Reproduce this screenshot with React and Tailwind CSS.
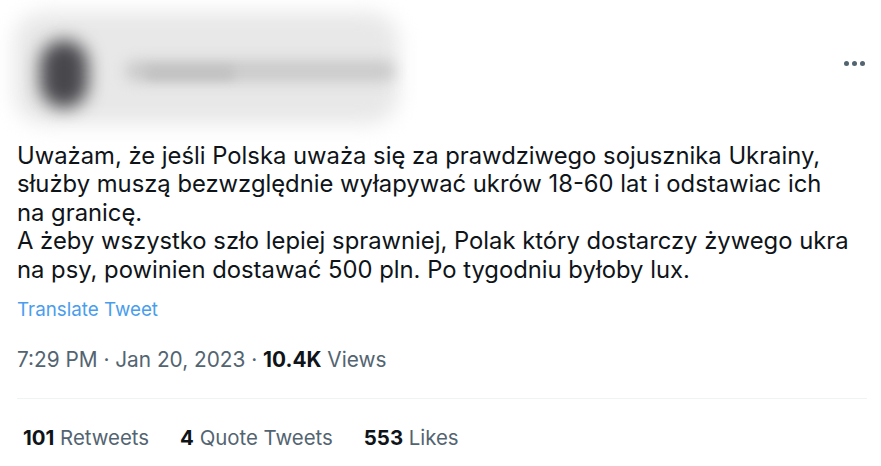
const lines = [
  "Uważam, że jeśli Polska uważa się za prawdziwego sojusznika Ukrainy,",
  "służby muszą bezwzględnie wyłapywać ukrów 18-60 lat i odstawiac ich",
  "na granicę.",
  "A żeby wszystko szło lepiej sprawniej, Polak który dostarczy żywego ukra",
  "na psy, powinien dostawać 500 pln. Po tygodniu byłoby lux.",
];

export default function App() {
  return (
    <div className="w-[881px] h-[466px] bg-white overflow-hidden" style={{ fontFamily: '"Inter", "Liberation Sans", sans-serif' }}>
      <div className="flex items-start justify-between pl-[10px] pr-[16px] pt-[8px] h-[125px]">
        <div className="relative w-[400px] h-[117px]">
          <div className="absolute left-[4px] top-[4px] w-[385px] h-[112px] bg-[#e8e8e8] blur-[10px] rounded-[30px]" />
          <div className="absolute left-[30px] top-[32px] w-[48px] h-[68px] bg-[#47474c] blur-[9px] rounded-full" />
          <div className="absolute left-[115px] top-[52px] w-[270px] h-[22px] bg-[#cbcbcb] blur-[7px] rounded-full" />
          <div className="absolute left-[135px] top-[58px] w-[90px] h-[14px] bg-[#c2c2c2] blur-[5px] rounded-full" />
        </div>
        <div className="flex gap-[3px] mt-[53px]">
          <span className="w-[5px] h-[5px] rounded-full bg-[#536471]" />
          <span className="w-[5px] h-[5px] rounded-full bg-[#536471]" />
          <span className="w-[5px] h-[5px] rounded-full bg-[#536471]" />
        </div>
      </div>

      <div className="px-[17px] pr-[14px] pt-[17px]">
        <p className="text-[23.8px] leading-[28.4px] text-[#0f1419] whitespace-nowrap">
          {lines.map((l, i) => (
            <span key={i} className="block">{l}</span>
          ))}
        </p>
        <div className="mt-[14px] text-[18.8px] leading-[24px] text-[#4a9ded]">Translate Tweet</div>
        <div className="mt-[26px] text-[20.8px] leading-[24px] text-[#536471]">
          7:29 PM · Jan 20, 2023 · <span className="font-bold text-[#0f1419]">10.4K</span> Views
        </div>
        <div className="mt-[26px] h-px bg-[#eff3f4]" />
        <div className="flex gap-[31px] pl-[6px] pt-[27px] text-[20.4px] leading-[24px] text-[#536471]">
          <div><span className="font-bold text-[#0f1419]">101</span> Retweets</div>
          <div><span className="font-bold text-[#0f1419]">4</span> Quote Tweets</div>
          <div><span className="font-bold text-[#0f1419]">553</span> Likes</div>
        </div>
      </div>
    </div>
  );
}
